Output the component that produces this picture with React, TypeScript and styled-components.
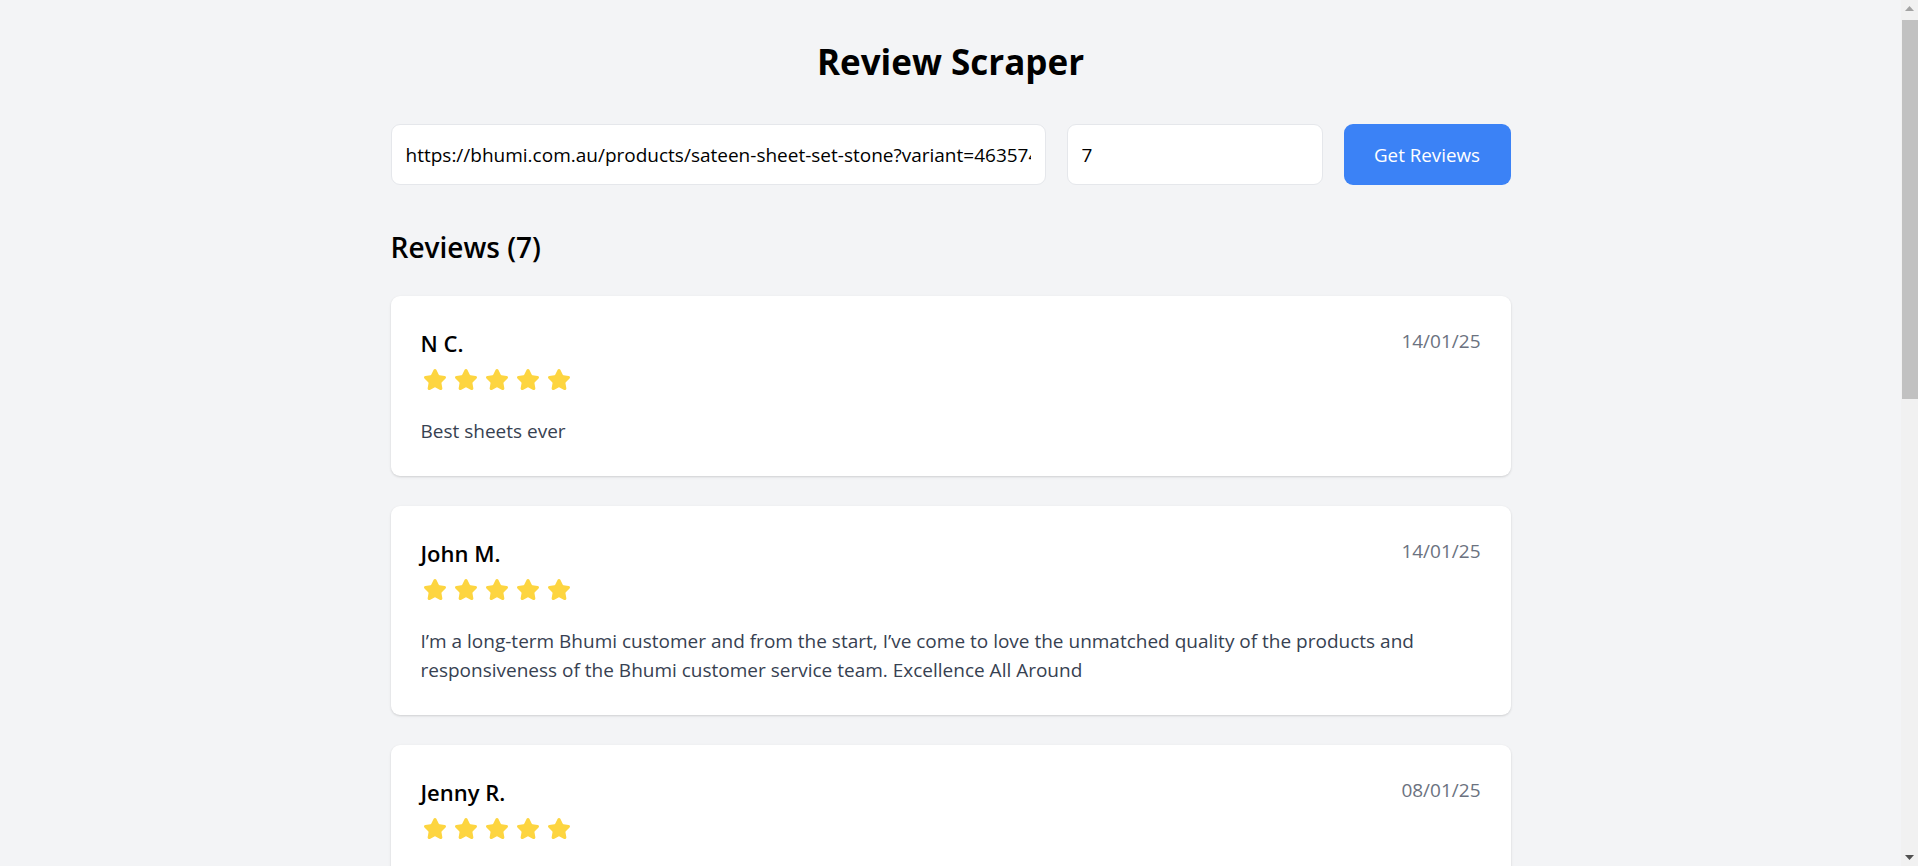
import React from "react";
import styled, { createGlobalStyle } from "styled-components";
import { Star } from "lucide-react";

const GlobalStyle = createGlobalStyle`
  html, body {
    margin: 0;
    padding: 0;
    background: #f3f4f6;
  }
  body {
    font-family: "Open Sans", "Noto Sans", sans-serif;
    color: #000;
  }
  *, *::before, *::after {
    box-sizing: border-box;
  }
`;

const Viewport = styled.div`
  padding-right: 17px;
`;

const ScrollTrack = styled.div`
  position: fixed;
  top: 0;
  right: 0;
  bottom: 0;
  width: 17px;
  background: #f1f1f1;
  display: flex;
  flex-direction: column;
  align-items: stretch;
`;

const ScrollArrow = styled.div`
  height: 17px;
  display: flex;
  align-items: center;
  justify-content: center;
  flex: 0 0 17px;
`;

const ScrollThumb = styled.div`
  position: absolute;
  top: 20px;
  left: 1px;
  right: 0;
  height: 379px;
  background: #c1c1c1;
`;

const Page = styled.main`
  max-width: 1120px;
  margin: 0 auto;
  padding: 38px 0 40px;
`;

const Title = styled.h1`
  margin: 0;
  text-align: center;
  font-size: 35px;
  line-height: 48px;
  font-weight: 700;
  color: #000;
`;

const Form = styled.form`
  display: flex;
  gap: 21px;
  margin-top: 38px;
`;

const Field = styled.input<{ $width?: number }>`
  height: 61px;
  flex: ${(p) => (p.$width ? `0 0 ${p.$width}px` : "1 1 auto")};
  min-width: 0;
  padding: 0 14px;
  border: 1px solid #e5e7eb;
  border-radius: 9px;
  background: #fff;
  font-family: "Open Sans", "Noto Sans", sans-serif;
  font-size: 19px;
  color: #000;
  outline: none;
`;

const Button = styled.button`
  flex: 0 0 167px;
  height: 61px;
  border: none;
  border-radius: 9px;
  background: #3b82f6;
  color: #fff;
  font-family: "Open Sans", "Noto Sans", sans-serif;
  font-size: 18.8px;
  cursor: pointer;
`;

const Heading = styled.h2`
  margin: 45px 0 0;
  font-size: 28px;
  line-height: 34px;
  font-weight: 600;
  color: #000;
`;

const List = styled.div`
  display: flex;
  flex-direction: column;
  gap: 30px;
  margin-top: 32px;
`;

const Card = styled.article`
  background: #fff;
  border-radius: 9px;
  padding: 33px 30px 29px;
  box-shadow: 0 1px 3px rgba(0, 0, 0, 0.1), 0 1px 2px rgba(0, 0, 0, 0.06);
`;

const CardHeader = styled.div`
  display: flex;
  justify-content: space-between;
  align-items: flex-start;
`;

const Name = styled.div`
  font-size: 22px;
  line-height: 28px;
  font-weight: 600;
  color: #000;
`;

const DateText = styled.div`
  font-size: 19px;
  line-height: 24px;
  color: #6b7280;
`;

const Stars = styled.div`
  display: flex;
  gap: 7px;
  margin: 11px 0 0 2px;
  color: #fdd540;
`;

const Body = styled.p`
  margin: 25px 0 0;
  font-size: 19px;
  line-height: 29.5px;
  color: #374151;
`;

type Review = { name: string; date: string; rating: number; text: string };

const reviews: Review[] = [
  { name: "N C.", date: "14/01/25", rating: 5, text: "Best sheets ever" },
  {
    name: "John M.",
    date: "14/01/25",
    rating: 5,
    text:
      "I\u2019m a long-term Bhumi customer and from the start, I\u2019ve come to love the unmatched quality of the products and responsiveness of the Bhumi customer service team. Excellence All Around",
  },
  {
    name: "Jenny R.",
    date: "08/01/25",
    rating: 5,
    text:
      "Beautiful sheets, so soft and silky. The stone colour is gorgeous and goes with everything in our bedroom. Have washed them several times and they still feel lovely.",
  },
  { name: "Sarah L.", date: "02/01/25", rating: 5, text: "Love these sheets, so soft and smooth!" },
  {
    name: "Michael T.",
    date: "28/12/24",
    rating: 5,
    text:
      "We bought the sateen set after staying at a friend\u2019s place that had Bhumi sheets and we were not disappointed. They have a lovely sheen, drape beautifully on the bed and sleep cool even on the warmest summer nights. The fitted sheet is deep enough for our thick mattress topper too. Delivery was quick and the packaging was plastic free, which we really appreciated.",
  },
  { name: "Karen W.", date: "19/12/24", rating: 5, text: "Soft, cool and beautifully made. Highly recommend." },
  { name: "Emma B.", date: "11/12/24", rating: 5, text: "Great quality and fast delivery." },
];

function StarRating({ rating }: { rating: number }) {
  return (
    <Stars>
      {Array.from({ length: rating }).map((_, i) => (
        <Star key={i} size={24} fill="currentColor" strokeWidth={2} />
      ))}
    </Stars>
  );
}

function Scrollbar() {
  return (
    <ScrollTrack aria-hidden="true">
      <ScrollArrow>
        <svg width="9" height="5" viewBox="0 0 9 5">
          <path d="M0 5 L4.5 0 L9 5 Z" fill="#a3a3a3" />
        </svg>
      </ScrollArrow>
      <ScrollThumb />
      <div style={{ flex: 1 }} />
      <ScrollArrow>
        <svg width="9" height="5" viewBox="0 0 9 5">
          <path d="M0 0 L4.5 5 L9 0 Z" fill="#505050" />
        </svg>
      </ScrollArrow>
    </ScrollTrack>
  );
}

export default function App() {
  return (
    <>
      <GlobalStyle />
      <Viewport>
        <Page>
          <Title>Review Scraper</Title>
          <Form onSubmit={(e) => e.preventDefault()}>
            <Field
              type="text"
              defaultValue="https://bhumi.com.au/products/sateen-sheet-set-stone?variant=46357434917089"
            />
            <Field type="number" $width={256} defaultValue="7" />
            <Button type="submit">Get Reviews</Button>
          </Form>
          <Heading>Reviews ({reviews.length})</Heading>
          <List>
            {reviews.map((r, i) => (
              <Card key={i}>
                <CardHeader>
                  <div>
                    <Name>{r.name}</Name>
                    <StarRating rating={r.rating} />
                  </div>
                  <DateText>{r.date}</DateText>
                </CardHeader>
                <Body>{r.text}</Body>
              </Card>
            ))}
          </List>
        </Page>
      </Viewport>
      <Scrollbar />
    </>
  );
}
